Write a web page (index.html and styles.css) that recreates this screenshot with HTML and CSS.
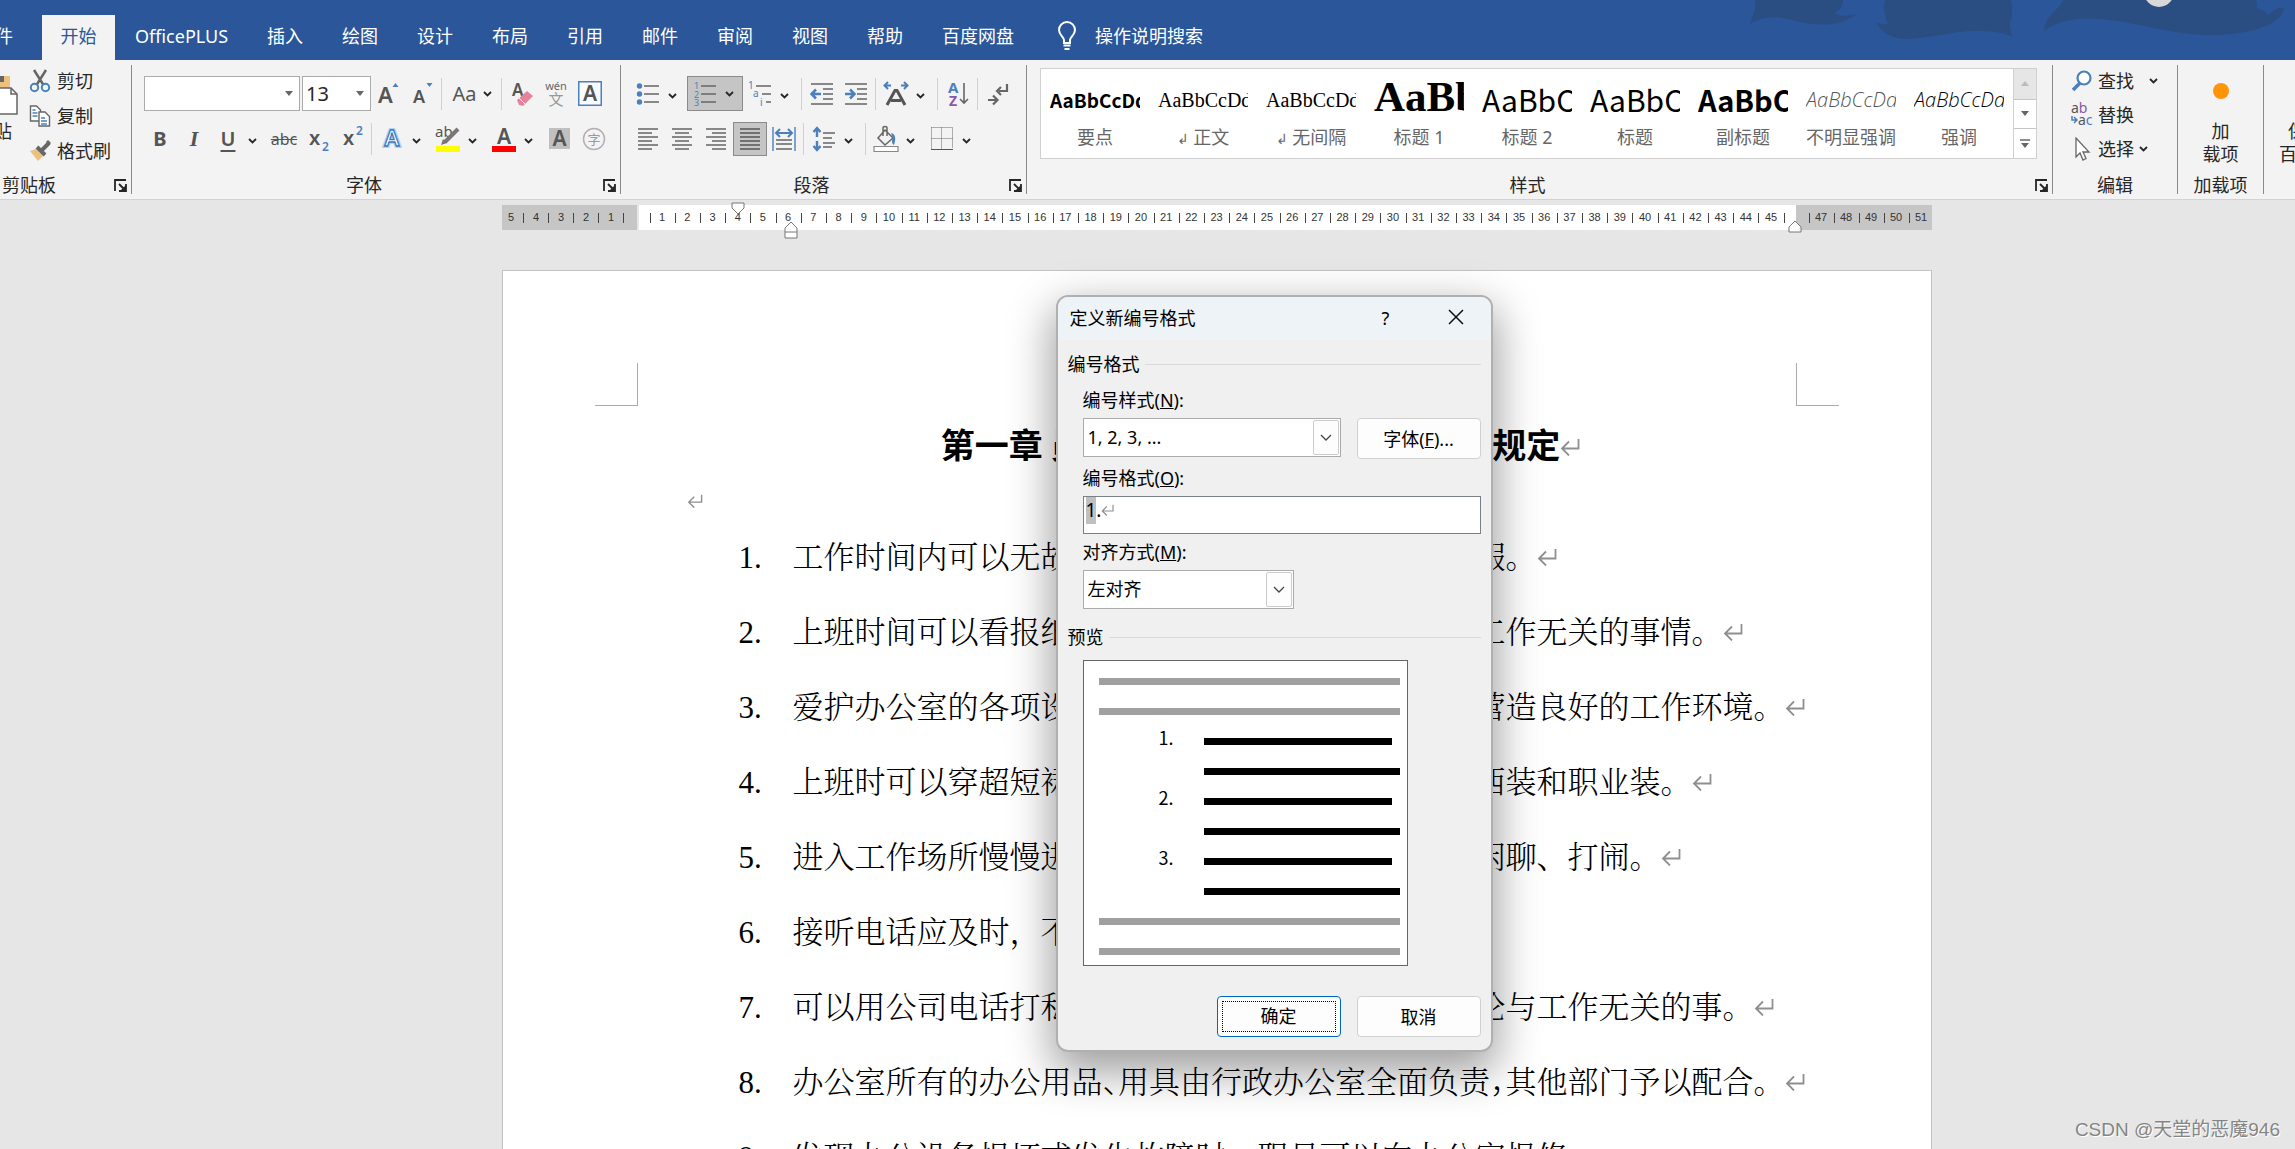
FILE: index.html
```html
<!DOCTYPE html>
<html lang="zh-CN">
<head>
<meta charset="utf-8">
<title>Word - 定义新编号格式</title>
<link rel="stylesheet" href="styles.css">
</head>
<body>
<svg class="defs" width="0" height="0" aria-hidden="true">
  <symbol id="chev" viewBox="0 0 9 6"><path d="M1 1l3.500 3.500L8 1" fill="none" stroke="#262626" stroke-width="1.800"/></symbol>
  <symbol id="launch" viewBox="0 0 13 13"><path d="M1 12V1h11M5 5l5 5M12 5v7H5" fill="none" stroke="#262626" stroke-width="1.800"/><path d="M12 6v6H6z" fill="#262626"/></symbol>
  <symbol id="ret" viewBox="0 0 20 18"><path d="M18.500 1v9.500H2M9 3.500l-7 7 7 7" fill="none" stroke="#8f8f8f" stroke-width="1.800"/></symbol>
  <symbol id="caret" viewBox="0 0 8 5"><path d="M0 0h8L4 5z" fill="#666"/></symbol>
  <symbol id="drop" viewBox="0 0 12 7"><path d="M1 1l5 5 5-5" fill="none" stroke="#444" stroke-width="1.300"/></symbol>
</svg>

<header class="titlebar">
  <svg class="art" viewBox="0 0 560 60" width="560" height="60" aria-hidden="true">
    <g fill="#2a4d82">
      <path d="M18 0c2 8-3 16-5 24 14-8 26-8 42-4 20 5 44 9 65-6-12 3-20 2-22-1 6-4 8-8 8-13z"/>
      <path d="M148 0c-2 9 0 17 3 24-6 0-11-1-11-1 4 10 16 16 30 16 26-1 45-8 70-8 14 0 24 1 35 5-2-8-3-10-1-16 2-7 1-14 0-20z"/>
      <path d="M326 0c-4 11-18 15-19 31 14-11 34-14 56-12 38 3 74 17 116 16 34-1 66-10 68-27-8-2-12 5-18 8 4-5-6-6-10-9 2-2 1-5-1-7z"/>
    </g>
    <circle cx="422" cy="-8" r="15" fill="#d8d8d8"/>
  </svg>
  <nav class="tabs">
    <button class="tab file">文件</button>
    <button class="tab active">开始</button>
    <button class="tab">OfficePLUS</button>
    <button class="tab">插入</button>
    <button class="tab">绘图</button>
    <button class="tab">设计</button>
    <button class="tab">布局</button>
    <button class="tab">引用</button>
    <button class="tab">邮件</button>
    <button class="tab">审阅</button>
    <button class="tab">视图</button>
    <button class="tab">帮助</button>
    <button class="tab">百度网盘</button>
    <button class="tab tell">
      <svg width="20" height="30" viewBox="0 0 20 30"><path d="M7 22v-3c0-3-5-5-5-10a8 8 0 0 1 16 0c0 5-5 7-5 10v3z" fill="none" stroke="#fff" stroke-width="2"/><path d="M6.500 24.500h7M7.500 28h5" stroke="#fff" stroke-width="2"/></svg>
      操作说明搜索
    </button>
  </nav>
</header>

<section class="ribbon">
  <div class="group clipboard">
    <div class="tools clip">
      <button class="paste">
        <svg width="18" height="44" viewBox="0 0 18 44"><path d="M0 2h10v12H0z" fill="#eec07e"/><path d="M0 2h4v6H0z" fill="#666"/><path d="M0 14h11l6 6v20H0" fill="#fff" stroke="#666" stroke-width="1.500"/><path d="M11 14v6h6" fill="none" stroke="#666" stroke-width="1.500"/></svg>
        <span>粘贴</span>
      </button>
      <div class="stack">
        <button class="cmd"><svg width="22" height="24" viewBox="0 0 22 24"><path d="M5 1l9.500 15M17 1L7.500 16" stroke="#666" stroke-width="2.500"/><g fill="none" stroke="#4a80bd" stroke-width="2"><circle cx="5.500" cy="18.500" r="3.700"/><circle cx="16.500" cy="18.500" r="3.700"/></g></svg>剪切</button>
        <button class="cmd"><svg width="22" height="24" viewBox="0 0 22 24"><g fill="#fff" stroke="#666" stroke-width="1.400"><path d="M1.500 2h6l4 4v11h-10z"/><path d="M10 8h6l4.500 4.500V22H10z"/></g><path d="M3.500 6h3M3.500 9h5M3.500 12h5M12 14h4M12 17h6M12 20h6" stroke="#4a80bd" stroke-width="1.400"/></svg>复制</button>
        <button class="cmd"><svg width="22" height="24" viewBox="0 0 22 24"><path d="M1 12l6-2 7 7-5 5z" fill="#eec07e"/><path d="M8 8l8 8M12 12l8-8" stroke="#666" stroke-width="4"/><path d="M18 2l3 3" stroke="#666" stroke-width="3"/></svg>格式刷</button>
      </div>
    </div>
    <div class="caption">剪贴板<button class="launcher" aria-label="剪贴板设置"><svg width="13" height="13"><use href="#launch"/></svg></button></div>
  </div>

  <div class="group font">
    <div class="tools">
      <div class="row">
        <span class="combo wide"><input aria-label="字体" value=""><svg width="8" height="5"><use href="#caret"/></svg></span>
        <span class="combo"><input aria-label="字号" value="13"><svg width="8" height="5"><use href="#caret"/></svg></span>
        <button class="b" aria-label="增大字号"><svg width="24" height="24" viewBox="0 0 24 24"><text x="2" y="21" font-size="22" class="lt">A</text><path d="M16.500 5h6l-3-4z" fill="#4a80bd"/></svg></button>
        <button class="b" aria-label="减小字号"><svg width="24" height="24" viewBox="0 0 24 24"><text x="3" y="21" font-size="18" class="lt">A</text><path d="M16.500 1h6l-3 4z" fill="#4a80bd"/></svg></button>
        <i class="sep"></i>
        <button class="b case" aria-label="更改大小写"><span class="aa">Aa</span><svg width="9" height="6"><use href="#chev"/></svg></button>
        <i class="sep"></i>
        <button class="b" aria-label="清除格式"><svg width="24" height="26" viewBox="0 0 24 26"><text x="2" y="15" font-size="17" class="lt">A</text><path d="M7 19l10-9 6 5-10 10-4-1z" fill="#e5839a"/><path d="M9 17l6 6" stroke="#f3f3f3"/></svg></button>
        <button class="b" aria-label="拼音指南"><svg width="24" height="28" viewBox="0 0 24 28"><text x="12" y="10" font-size="11" text-anchor="middle" fill="#666">wén</text><text x="12" y="25" font-size="15" text-anchor="middle" fill="#999">文</text></svg></button>
        <button class="b" aria-label="字符边框"><svg width="24" height="25" viewBox="0 0 24 25"><path d="M.75.75h22.500v23.500H.75z" fill="#f8fbff" stroke="#4a80bd" stroke-width="1.500"/><text x="12" y="20" font-size="21" text-anchor="middle" class="lt">A</text></svg></button>
      </div>
      <div class="row">
        <button class="b txt bold">B</button>
        <button class="b txt ital">I</button>
        <button class="b txt und">U</button>
        <button class="c" aria-label="下划线选项"><svg width="9" height="6"><use href="#chev"/></svg></button>
        <button class="b txt strike">abc</button>
        <button class="b" aria-label="下标"><svg width="24" height="28" viewBox="0 0 24 28"><text x="3" y="20" font-size="20" class="lt">x</text><text x="16" y="26" font-size="12" fill="#4a80bd" font-weight="600">2</text></svg></button>
        <button class="b" aria-label="上标"><svg width="24" height="28" viewBox="0 0 24 28"><text x="3" y="20" font-size="20" class="lt">x</text><text x="16" y="10" font-size="12" fill="#4a80bd" font-weight="600">2</text></svg></button>
        <i class="sep"></i>
        <button class="b" aria-label="文本效果"><svg width="24" height="26" viewBox="0 0 24 26"><text x="12" y="20" font-size="22" text-anchor="middle" fill="#fff" stroke="#b4d2f0" stroke-width="4" font-weight="600">A</text><text x="12" y="20" font-size="22" text-anchor="middle" fill="#fff" stroke="#3c78bd" stroke-width="1.300" font-weight="600">A</text></svg></button>
        <button class="c" aria-label="文本效果选项"><svg width="9" height="6"><use href="#chev"/></svg></button>
        <button class="b" aria-label="突出显示"><svg width="26" height="28" viewBox="0 0 26 28"><text x="0" y="12" font-size="15" fill="#555">ab</text><path d="M23 4L10 17" stroke="#777" stroke-width="4"/><path d="M8 14l4 4-6 2z" fill="#777"/><path d="M1 21h24v6H1z" fill="#ff0"/></svg></button>
        <button class="c" aria-label="突出显示选项"><svg width="9" height="6"><use href="#chev"/></svg></button>
        <button class="b" aria-label="字体颜色"><svg width="26" height="28" viewBox="0 0 26 28"><text x="13" y="19" font-size="21" text-anchor="middle" class="lt">A</text><path d="M1 21h24v6H1z" fill="red"/></svg></button>
        <button class="c" aria-label="字体颜色选项"><svg width="9" height="6"><use href="#chev"/></svg></button>
        <button class="b" aria-label="字符底纹"><svg width="22" height="22" viewBox="0 0 22 22"><path d="M0 0h21v21H0z" fill="#c0c0c0"/><text x="10.500" y="18" font-size="21" text-anchor="middle" class="lt">A</text></svg></button>
        <button class="b" aria-label="带圈字符"><svg width="24" height="24" viewBox="0 0 24 24"><circle cx="12" cy="12" r="10.500" fill="none" stroke="#b5aeb5" stroke-width="1.500"/><text x="12" y="17" font-size="13" text-anchor="middle" fill="#999">字</text></svg></button>
      </div>
    </div>
    <div class="caption">字体<button class="launcher" aria-label="字体设置"><svg width="13" height="13"><use href="#launch"/></svg></button></div>
  </div>

  <div class="group para">
    <div class="tools">
      <div class="row">
        <button class="b" aria-label="项目符号"><svg width="24" height="24" viewBox="0 0 24 24"><g fill="#4a80bd"><circle cx="3.500" cy="4" r="2.700"/><circle cx="3.500" cy="12" r="2.700"/><circle cx="3.500" cy="20" r="2.700"/></g><path d="M8 4h15M8 12h15M8 20h15" stroke="#666" stroke-width="1.400"/></svg></button>
        <button class="c" aria-label="项目符号选项"><svg width="9" height="6"><use href="#chev"/></svg></button>
        <button class="split on" aria-label="编号"><svg width="24" height="26" viewBox="0 0 24 26"><g fill="#4a80bd" font-size="9"><text x="1" y="8">1</text><text x="1" y="17">2</text><text x="1" y="25">3</text></g><path d="M8 5h15M8 13h15M8 21h15" stroke="#666" stroke-width="1.400"/></svg><svg width="9" height="6"><use href="#chev"/></svg></button>
        <button class="b" aria-label="多级列表"><svg width="24" height="26" viewBox="0 0 24 26"><g fill="#4a80bd" font-size="10"><text x="0" y="8">1</text><text x="5" y="16">a</text><text x="12" y="25">i</text></g><path d="M8 5h15M14 13h9M18 21h5" stroke="#666" stroke-width="1.400"/></svg></button>
        <button class="c" aria-label="多级列表选项"><svg width="9" height="6"><use href="#chev"/></svg></button>
        <i class="sep"></i>
        <button class="b" aria-label="减少缩进"><svg width="24" height="24" viewBox="0 0 24 24"><path d="M1 2h22M13 7h10M13 12h10M13 17h10M1 22h22" stroke="#666" stroke-width="1.400"/><path d="M11 12H2M6 7.500L1.500 12 6 16.500" fill="none" stroke="#4a80bd" stroke-width="2.500"/></svg></button>
        <button class="b" aria-label="增加缩进"><svg width="24" height="24" viewBox="0 0 24 24"><path d="M1 2h22M13 7h10M13 12h10M13 17h10M1 22h22" stroke="#666" stroke-width="1.400"/><path d="M1 12h9M6 7.500l4.500 4.500L6 16.500" fill="none" stroke="#4a80bd" stroke-width="2.500"/></svg></button>
        <i class="sep"></i>
        <button class="b" aria-label="中文版式"><svg width="26" height="26" viewBox="0 0 26 26"><path d="M4 24L12 9.500h2L22 24M8 19.500h10" fill="none" stroke="#555" stroke-width="3"/><path d="M2 4.500h6M5 1L1.500 4.500 5 8M24 4.500h-6M21 1l3.500 3.500L21 8" fill="none" stroke="#4a80bd" stroke-width="2"/></svg></button>
        <button class="c" aria-label="中文版式选项"><svg width="9" height="6"><use href="#chev"/></svg></button>
        <i class="sep"></i>
        <button class="b" aria-label="排序"><svg width="22" height="28" viewBox="0 0 22 28"><text x="1" y="13" font-size="15" font-weight="700" fill="#4a80bd">A</text><text x="2" y="26" font-size="14" font-weight="700" fill="#8c55ad">Z</text><path d="M17 3v20M13 19l4 4 4-4" fill="none" stroke="#666" stroke-width="1.600"/></svg></button>
        <i class="sep"></i>
        <button class="b" aria-label="显示编辑标记"><svg width="24" height="24" viewBox="0 0 24 24"><path d="M21 2v7h-8M15 5l-4 4 4 4M2 18h9M7 13.500l4.500 4.500L7 22.500" fill="none" stroke="#666" stroke-width="2.200"/></svg></button>
      </div>
      <div class="row">
        <button class="b" aria-label="左对齐"><svg width="22" height="24" viewBox="0 0 22 24"><path d="M1 2h20M1 6h14M1 10h20M1 14h14M1 18h20M1 22h14" stroke="#666" stroke-width="1.400"/></svg></button>
        <button class="b" aria-label="居中"><svg width="22" height="24" viewBox="0 0 22 24"><path d="M1 2h20M4 6h14M1 10h20M4 14h14M1 18h20M4 22h14" stroke="#666" stroke-width="1.400"/></svg></button>
        <button class="b" aria-label="右对齐"><svg width="22" height="24" viewBox="0 0 22 24"><path d="M1 2h20M7 6h14M1 10h20M7 14h14M1 18h20M7 22h14" stroke="#666" stroke-width="1.400"/></svg></button>
        <button class="b on" aria-label="两端对齐"><svg width="22" height="24" viewBox="0 0 22 24"><path d="M1 2h20M1 6h20M1 10h20M1 14h20M1 18h20M1 22h20" stroke="#555" stroke-width="1.400"/></svg></button>
        <button class="b" aria-label="分散对齐"><svg width="24" height="24" viewBox="0 0 24 24"><path d="M1 0v24M23 0v24" stroke="#4a80bd" stroke-width="1.400"/><path d="M4 6h16M8 2L4 6l4 4M16 2l4 4-4 4" fill="none" stroke="#4a80bd" stroke-width="2"/><path d="M4 13h16M4 17h16M4 22h16" stroke="#666" stroke-width="1.400"/></svg></button>
        <i class="sep"></i>
        <button class="b" aria-label="行距"><svg width="24" height="26" viewBox="0 0 24 26"><path d="M5 2v9M1.500 6L5 2l3.500 4M5 24v-9M1.500 20L5 24l3.500-4" fill="none" stroke="#4a80bd" stroke-width="2.400"/><path d="M11 7h12M11 12h9M11 17h12M11 21h9" stroke="#666" stroke-width="1.400"/></svg></button>
        <button class="c" aria-label="行距选项"><svg width="9" height="6"><use href="#chev"/></svg></button>
        <i class="sep"></i>
        <button class="b" aria-label="底纹"><svg width="26" height="28" viewBox="0 0 26 28"><path d="M12 5l8 8-8 7-7-7zM10 11V3c0-2 4-2 4 0v8" fill="none" stroke="#666" stroke-width="1.500"/><path d="M18 8c5 1 5 6 3 12-3-2-2-5-1-7z" fill="#4a80bd"/><path d="M1 21.500h24v5H1z" fill="#fff" stroke="#888" stroke-width="1.200"/></svg></button>
        <button class="c" aria-label="底纹选项"><svg width="9" height="6"><use href="#chev"/></svg></button>
        <button class="b" aria-label="边框"><svg width="22" height="24" viewBox="0 0 22 24"><path d="M.5.500h21v21M.5.500v21M10.500.500v21M.5 11.500h21" fill="none" stroke="#666" stroke-dasharray="1 1"/><path d="M0 22.500h22" stroke="#555"/></svg></button>
        <button class="c" aria-label="边框选项"><svg width="9" height="6"><use href="#chev"/></svg></button>
      </div>
    </div>
    <div class="caption">段落<button class="launcher" aria-label="段落设置"><svg width="13" height="13"><use href="#launch"/></svg></button></div>
  </div>

  <div class="group styles">
    <div class="gallery">
      <button class="style"><span class="sample s-strong">AaBbCcDd</span><span>要点</span></button>
      <button class="style"><span class="sample s-serif">AaBbCcDd</span><span><small>↲</small> 正文</span></button>
      <button class="style"><span class="sample s-serif">AaBbCcDd</span><span><small>↲</small> 无间隔</span></button>
      <button class="style"><span class="sample s-h1">AaBb</span><span>标题 1</span></button>
      <button class="style"><span class="sample s-h2">AaBbCc</span><span>标题 2</span></button>
      <button class="style"><span class="sample s-h2">AaBbCc</span><span>标题</span></button>
      <button class="style"><span class="sample s-sub">AaBbCc</span><span>副标题</span></button>
      <button class="style"><span class="sample s-em soft">AaBbCcDd</span><span>不明显强调</span></button>
      <button class="style"><span class="sample s-em">AaBbCcDd</span><span>强调</span></button>
      <div class="pager">
        <button class="off" aria-label="上一行"><svg width="8" height="5" viewBox="0 0 8 5"><path d="M0 5h8L4 0z" fill="#bbb"/></svg></button>
        <button aria-label="下一行"><svg width="8" height="5"><use href="#caret"/></svg></button>
        <button aria-label="其他"><svg width="10" height="9" viewBox="0 0 10 9"><path d="M0 1h10" stroke="#666" stroke-width="1.500"/><path d="M1 4h8L5 9z" fill="#666"/></svg></button>
      </div>
    </div>
    <div class="caption">样式<button class="launcher" aria-label="样式设置"><svg width="13" height="13"><use href="#launch"/></svg></button></div>
  </div>

  <div class="group edit">
    <div class="stack">
      <button class="cmd"><svg width="22" height="24" viewBox="0 0 22 24"><circle cx="13" cy="9" r="6.500" fill="#fff" stroke="#4a80bd" stroke-width="2.200"/><path d="M9 14l-7 7" stroke="#4a80bd" stroke-width="3.500"/></svg>查找<svg class="far" width="9" height="6"><use href="#chev"/></svg></button>
      <button class="cmd"><svg width="22" height="26" viewBox="0 0 22 26"><text x="0" y="11" font-size="14" fill="#555">a<tspan fill="#8c55ad">b</tspan></text><text x="7" y="23" font-size="14" fill="#555">a<tspan fill="#4a80bd">c</tspan></text><path d="M1 14v4h5M3 15l3 3-3 3" fill="none" stroke="#4a80bd" stroke-width="1.500"/></svg>替换</button>
      <button class="cmd"><svg width="22" height="24" viewBox="0 0 22 24"><path d="M5 1v19l4-4 3 7 3-1.500-3-6.500h6z" fill="#fff" stroke="#666" stroke-width="1.300"/></svg>选择<svg width="9" height="6"><use href="#chev"/></svg></button>
    </div>
    <div class="caption">编辑</div>
  </div>

  <div class="group addin">
    <button class="big"><svg width="18" height="18"><circle cx="9" cy="9" r="8" fill="#ff9408"/></svg><span>加<br>载项</span></button>
    <div class="caption">加载项</div>
  </div>
  <div class="group last">
    <button class="big"><svg width="18" height="18"></svg><span>保存到<br>百度网盘</span></button>
  </div>
</section>

<main class="workspace">
  <div class="ruler">
    <ol class="seg before"><li>5</li><li>4</li><li>3</li><li>2</li><li>1</li></ol>
    <ol class="seg mid"><li>1</li><li>2</li><li>3</li><li>4</li><li>5</li><li>6</li><li>7</li><li>8</li><li>9</li><li>10</li><li>11</li><li>12</li><li>13</li><li>14</li><li>15</li><li>16</li><li>17</li><li>18</li><li>19</li><li>20</li><li>21</li><li>22</li><li>23</li><li>24</li><li>25</li><li>26</li><li>27</li><li>28</li><li>29</li><li>30</li><li>31</li><li>32</li><li>33</li><li>34</li><li>35</li><li>36</li><li>37</li><li>38</li><li>39</li><li>40</li><li>41</li><li>42</li><li>43</li><li>44</li><li>45</li></ol>
    <ol class="seg after"><li>47</li><li>48</li><li>49</li><li>50</li><li>51</li></ol>
    <svg class="mark first" width="14" height="14" viewBox="0 0 14 14"><path d="M1 1h12v5l-6 6-6-6z" fill="#fff" stroke="#777"/></svg>
    <svg class="mark hang" width="14" height="18" viewBox="0 0 14 18"><path d="M1 17V7l6-6 6 6v10zM1 11h12" fill="#fff" stroke="#777"/></svg>
    <svg class="mark right" width="14" height="14" viewBox="0 0 14 14"><path d="M1 12V7l6-6 6 6v5z" fill="#fff" stroke="#777"/></svg>
  </div>

  <article class="page">
    <i class="corner tl"></i><i class="corner tr"></i>
    <h1>第一章 员工办公室日常行为管理暂行规定<svg width="20" height="18"><use href="#ret"/></svg></h1>
    <p class="blank"><svg width="16" height="14"><use href="#ret"/></svg></p>
    <ol class="rules">
      <li><b>1.</b>工作时间内可以无故迟到、早退、旷工以及随意请假。<svg width="20" height="18"><use href="#ret"/></svg></li>
      <li><b>2.</b>上班时间可以看报纸、玩手机、玩游戏及做一些与工作无关的事情。<svg width="20" height="18"><use href="#ret"/></svg></li>
      <li><b>3.</b>爱护办公室的各项设施和设备，保持室内的清洁，营造良好的工作环境。<svg width="20" height="18"><use href="#ret"/></svg></li>
      <li><b>4.</b>上班时可以穿超短裙和拖鞋，重要场合必须要穿着西装和职业装。<svg width="20" height="18"><use href="#ret"/></svg></li>
      <li><b>5.</b>进入工作场所慢慢进行，不得大声喧哗，不得随意闲聊、打闹。<svg width="20" height="18"><use href="#ret"/></svg></li>
      <li><b>6.</b>接听电话应及时，不得超过三声。<svg width="20" height="18"><use href="#ret"/></svg></li>
      <li><b>7.</b>可以用公司电话打私人电话，不得长时间占用、谈论与工作无关的事。<svg width="20" height="18"><use href="#ret"/></svg></li>
      <li><b>8.</b>办公室所有的办公用品<span class="half">、</span>用具由行政办公室全面负责<span class="half">，</span>其他部门予以配合。<svg width="20" height="18"><use href="#ret"/></svg></li>
      <li><b>9.</b>发现办公设备损坏或发生故障时，职员可以向办公室报修。<svg width="20" height="18"><use href="#ret"/></svg></li>
    </ol>

    <form class="dialog" role="dialog" aria-labelledby="dlg-title" onsubmit="return false">
      <div class="dlg-bar">
        <span id="dlg-title">定义新编号格式</span>
        <button type="button">?</button>
        <button type="button" aria-label="关闭"><svg width="16" height="16" viewBox="0 0 16 16"><path d="M1 1l14 14M15 1L1 15" stroke="#111" stroke-width="1.500"/></svg></button>
      </div>
      <div class="dlg-body">
        <div class="section">编号格式</div>
        <div class="fields">
          <label for="num-style">编号样式(<u>N</u>):</label>
          <div class="pair">
            <span class="pick"><select id="num-style"><option>1, 2, 3, ...</option></select><i><svg width="12" height="7"><use href="#drop"/></svg></i></span>
            <button type="button" class="btn">字体(<u>F</u>)...</button>
          </div>
          <label for="num-format">编号格式(<u>O</u>):</label>
          <span class="textbox"><input id="num-format" value="1."><svg width="13" height="12"><use href="#ret"/></svg></span>
          <label for="num-align">对齐方式(<u>M</u>):</label>
          <span class="pick short"><select id="num-align"><option>左对齐</option></select><i><svg width="12" height="7"><use href="#drop"/></svg></i></span>
        </div>
        <div class="section">预览</div>
        <div class="preview">
          <i></i><i></i>
          <span class="item"><b>1.</b><i></i></span><i class="ink"></i>
          <span class="item"><b>2.</b><i></i></span><i class="ink"></i>
          <span class="item"><b>3.</b><i></i></span><i class="ink"></i>
          <i></i><i></i>
        </div>
        <div class="actions">
          <button type="submit" class="btn ok"><span>确定</span></button>
          <button type="button" class="btn">取消</button>
        </div>
      </div>
    </form>
  </article>
  <div class="watermark">CSDN @天堂的恶魔946</div>
</main>
<script src="app.js"></script>
</body>
</html>
```
FILE: app.js
```js
const field = document.getElementById('num-format');
field.focus({ preventScroll: true });
field.setSelectionRange(0, 1);
```
FILE: styles.css
```css
* { box-sizing: border-box; }
body {
  margin: 0;
  height: 100vh;
  overflow: hidden;
  display: flex;
  flex-direction: column;
  background: #e6e6e6;
  color: #262626;
  font: 18px/24px "Noto Sans", "Noto Sans CJK SC", sans-serif;
}
button, input, select { font: inherit; color: inherit; border: 0; margin: 0; padding: 0; background: none; border-radius: 0; }
button { white-space: nowrap; }
ol { list-style: none; margin: 0; padding: 0; }
svg { flex: none; }
.defs { position: absolute; }
.lt { fill: #555; font-weight: 600; }

/* title bar */
.titlebar { position: relative; flex: none; height: 60px; padding-top: 15px; background: #2b579a; overflow: hidden; }
.art { position: absolute; top: 0; right: -2px; overflow: hidden; }
.tabs { position: relative; display: flex; height: 45px; }
.tab { flex: none; padding: 0 19px 3px 20px; color: #fff; }
.file { width: 42px; padding: 0 29px 3px 0; display: flex; justify-content: flex-end; align-items: center; overflow: hidden; }
.active { width: 73px; padding: 0 18px 3px; background: #f3f3f3; color: #2b579a; }
.tell { display: flex; align-items: center; gap: 18px; margin-left: 4px; }

/* ribbon */
.ribbon { flex: none; display: flex; height: 140px; padding-top: 5px; background: #f3f3f3; border-bottom: 1px solid #d2d2d2; overflow: hidden; }
.group { flex: none; position: relative; height: 129px; display: flex; flex-direction: column; border-right: 1px solid #8a8a8a; }
.clipboard { width: 132px; }
.font { width: 489px; padding-left: 11px; }
.para { width: 406px; padding-left: 10px; }
.styles { flex: 1; padding: 0 15px 0 13px; min-width: 0; }
.edit { width: 125px; padding-left: 18px; }
.addin { width: 86px; }
.last { width: 31px; border: 0; }
.caption { position: absolute; left: 0; right: 0; bottom: -3px; line-height: 24px; text-align: center; }
.font .caption, .para .caption, .styles .caption { padding-right: 24px; }
.clipboard .caption { right: 73px; }
.launcher { position: absolute; right: 4px; top: 6px; width: 13px; height: 13px; display: flex; }
.clipboard .launcher { right: -69px; }
.font .tools, .para .tools { display: grid; gap: 10px; padding-top: 11px; }
.row { display: flex; align-items: center; height: 35px; }
.b { width: 34px; height: 34px; display: flex; align-items: center; justify-content: center; }
.c { width: 22px; height: 34px; padding: 4px 0 0 3px; display: flex; align-items: center; }
.split { width: 56px; height: 35px; padding: 0 8px 0 5px; display: flex; align-items: center; justify-content: space-between; }
.on { background: #c5c5c5; border: 1px solid #8a8a8a; }
.sep { width: 1px; height: 32px; margin: 0 3px 0 2px; background: #d0d0d0; }
.case { width: 54px; gap: 6px; color: #555; }
.aa { font-size: 20px; }
.combo { position: relative; width: 69px; height: 35px; background: #fff; border: 1px solid #ababab; display: flex; align-items: center; }
.combo.wide { width: 156px; margin: 0 2px 0 1px; }
.combo input { width: 100%; padding-left: 3px; outline: 0; font-size: 20px; }
.combo svg { position: absolute; right: 6px; }
.txt { font-size: 20px; color: #555; }
.bold { font-weight: 700; }
.ital { font-family: "Liberation Serif", serif; font-style: italic; font-weight: 700; font-size: 22px; }
.und { text-decoration: underline; text-underline-offset: 4px; font-weight: 600; }
.strike { font-size: 16px; text-decoration: line-through; }
.clip { display: flex; }
.paste { width: 29px; height: 80px; margin-top: 9px; display: flex; flex-direction: column; align-items: flex-start; overflow: hidden; }
.paste span { width: 12px; display: flex; justify-content: flex-end; margin-top: 1px; }
.stack { display: grid; grid-auto-rows: 35px; justify-items: start; }
.edit .stack { grid-auto-rows: 34px; }
.cmd { height: 32px; display: flex; align-items: center; gap: 6px; }
.edit .cmd { gap: 5px; }
.far { margin-left: 10px; }

/* style gallery */
.gallery { display: flex; height: 91px; margin-top: 3px; background: #fff; border: 1px solid #d0d0d0; overflow: hidden; }
.style { flex: 1; min-width: 0; display: flex; flex-direction: column; align-items: center; color: #666; }
.style small { font-size: 14px; }
.sample { width: 90px; height: 54px; margin-bottom: 2px; overflow: hidden; color: #000; text-align: left; }
.s-strong { font: 700 19px/62px "Noto Sans CJK SC", sans-serif; }
.s-serif { font: 20px/62px "Liberation Serif", serif; }
.s-h1 { font: 700 43px/56px "Liberation Serif", serif; }
.s-h2 { font: 400 30px/60px "Noto Sans CJK SC", sans-serif; }
.s-sub { font: 700 29px/60px "Noto Sans CJK SC", sans-serif; }
.s-em { font: italic 300 20px/62px "Open Sans", sans-serif; }
.soft { color: #555; }
.pager { width: 23px; display: grid; grid-template-rows: 1fr 1fr 1fr; border-left: 1px solid #d0d0d0; }
.pager button { display: flex; align-items: center; justify-content: center; }
.pager button + button { border-top: 1px solid #c6c6c6; }
.off { background: #e6e6e6; }

.big { height: 108px; display: flex; flex-direction: column; align-items: center; line-height: 23px; padding-top: 17px; gap: 20px; }
.last .big { align-self: flex-start; margin-left: 15px; }

/* workspace */
.workspace { position: relative; flex: 1; min-height: 0; overflow: hidden; padding: 5px 0 0 138px; }
.ruler { position: relative; max-width: 1430px; height: 25px; margin: 0 auto 40px; display: flex; font: 11px/25px "Liberation Sans", sans-serif; color: #333; }
.seg { display: flex; overflow: hidden; background: #c6c6c6; }
.seg li { flex: 1; display: flex; align-items: center; text-align: center; justify-content: space-around; }
.before { width: 135px; justify-content: flex-end; padding-right: 13px; margin-right: 2px; }
.before li, .after li { flex: 0 0 25px; }
.mid { flex: 1; background: #fff; padding: 0 11px 0 11px; }
.after { width: 136px; padding-left: 13px; }
.mid li, .after li { background: linear-gradient(#444, #444) left center / 1px 10px no-repeat; }
.before li { background: linear-gradient(#444, #444) right center / 1px 10px no-repeat; }
.mid::after { content: ""; width: 1px; height: 10px; align-self: center; background: #444; }
.mark { position: absolute; }
.first { left: 229px; top: -3px; }
.hang { left: 282px; top: 16px; }
.right { left: 1286px; top: 15px; }

.page { position: relative; max-width: 1430px; margin: 0 auto; padding: 135px 134px 0; background: #fff; border: 1px solid #c3c3c3; color: #000; }
.corner { position: absolute; top: 92px; width: 43px; height: 43px; border: solid #aaa; }
.tl { left: 92px; border-width: 0 1px 1px 0; }
.tr { right: 92px; border-width: 0 0 1px 1px; }
h1 { margin: 0; padding-left: 88px; text-align: center; font: 700 34px/76px "Noto Sans CJK SC", sans-serif; white-space: nowrap; }
h1 svg, .rules svg { margin-bottom: 2px; }
.blank { margin: 0; height: 38px; padding-left: 50px; display: flex; align-items: center; }
.rules { padding-left: 102px; font: 300 31px/75px "Liberation Serif", "Noto Serif CJK SC", "Noto Sans CJK SC", serif; white-space: nowrap; }
.rules li { height: 75px; }
.rules b { display: inline-block; width: 54px; font-weight: 400; }
.half { font-family: "Noto Sans CJK SC", sans-serif; line-height: 31px; font-feature-settings: "halt"; }

/* dialog */
.dialog { position: absolute; left: 553px; top: 24px; width: 437px; background: #f0f0f0; border: 2px solid #b0b0b0; border-radius: 12px; overflow: hidden; color: #000; box-shadow: 0 16px 44px 4px rgba(0, 0, 0, .38); }
.dlg-bar { height: 43px; padding: 0 0 2px 12px; display: flex; align-items: center; background: #eef3f8; }
.dlg-bar span { flex: 1; }
.dlg-bar button { width: 70px; }
.dlg-body { padding: 12px 10px 13px; }
.section { display: flex; align-items: center; gap: 5px; }
.section::after { content: ""; flex: 1; height: 1px; background: #d9d9d9; }
.fields { padding: 12px 0 16px 15px; display: flex; flex-direction: column; align-items: flex-start; }
.fields label { margin-bottom: 6px; }
.pair { width: 100%; margin-bottom: 7px; display: flex; justify-content: space-between; }
.pick { position: relative; width: 258px; height: 39px; background: #fff; border: 1px solid #ababab; }
.pick.short { width: 211px; }
.pick select { width: 100%; height: 100%; padding: 0 0 2px 4px; appearance: none; }
.pick i { position: absolute; top: 1px; right: 1px; bottom: 1px; width: 26px; border: 1px solid #ccc; border-radius: 2px; background: #fdfdfd; display: flex; align-items: center; justify-content: center; pointer-events: none; }
.btn { width: 124px; height: 41px; background: #fdfdfd; border: 1px solid #d0d0d0; border-radius: 4px; }
.textbox { position: relative; width: 100%; height: 38px; margin-bottom: 6px; background: #fff; border: 1px solid #7a808a; }
.textbox input { width: 100%; padding-left: 2px; outline: 0; height: 27px; line-height: 27px; display: block; font-size: 19px; }
.textbox input::selection { background: #c0c0c0; color: #000; }
.textbox svg { position: absolute; left: 17px; top: 7px; }
.preview { width: 325px; height: 306px; margin: 11px 0 30px 15px; padding: 17px 7px 0 15px; background: #fff; border: 1px solid #666; }
.preview > i, .preview .item { display: block; height: 7px; margin-bottom: 23px; background: #a0a0a0; }
.preview > .ink { margin-left: 105px; background: #000; }
.preview .item { display: flex; align-items: center; background: none; padding: 0 8px 0 60px; font: 18px/18px "Noto Sans CJK SC", sans-serif; }
.item b { font-weight: 400; padding-bottom: 10px; }
.item i { height: 7px; width: 188px; margin-left: auto; background: #000; }
.actions { display: flex; justify-content: flex-end; gap: 16px; }
.ok { border-color: #0067c0; padding: 4px; }
.ok span { display: block; line-height: 29px; border: 1px dotted #000; }

.watermark { position: absolute; right: 15px; bottom: 7px; color: #858585; text-shadow: 1px 1px 0 #fff; font: 19px/24px "Liberation Sans", "Noto Sans CJK SC", sans-serif; }
```
